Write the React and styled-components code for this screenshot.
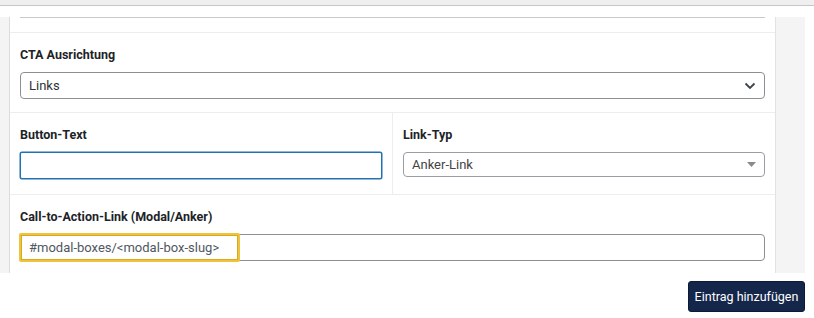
import React from "react";
import styled, { createGlobalStyle } from "styled-components";

const GlobalStyle = createGlobalStyle`
  body {
    margin: 0;
    background: #ffffff;
    font-family: "Segoe UI", Roboto, "Liberation Sans", Arial, sans-serif;
  }
  * {
    box-sizing: border-box;
  }
`;

const TopBar = styled.div`
  height: 6px;
  background: #efefef;
  border-bottom: 1px solid #c6c6c6;
`;

const Gap = styled.div`
  height: 11px;
`;

const Shell = styled.div`
  background: #f4f4f4;
  margin-right: 9px;
  padding: 0 29px 0 9px;
`;

const Panel = styled.div`
  background: #ffffff;
  border-left: 1px solid #dcdcde;
  border-right: 1px solid #e2e2e2;
`;

const Row = styled.div`
  display: flex;
  border-bottom: ${(p) => (p.last ? "none" : "1px solid #ededed")};
`;

const PrevRow = styled.div`
  height: 16px;
  padding: 0 10px;
  border-bottom: 1px solid #ededed;
  &::before {
    content: "";
    display: block;
    height: 1px;
    background: #c9c9c9;
  }
`;

const Cell = styled.div`
  flex: 1;
  padding: 12px 10px ${(p) => p.bottom || 13}px;
  border-right: ${(p) => (p.divider ? "1px solid #ededed" : "none")};
`;

const Label = styled.div`
  font-size: 12.5px;
  font-weight: 700;
  line-height: 20px;
  color: #1d2327;
  margin-bottom: 7px;
`;

const Field = styled.div`
  position: relative;
  display: flex;
  align-items: center;
  height: ${(p) => p.h || 27}px;
  padding: 0 8px;
  border: 1px solid ${(p) => (p.focus ? "#2271b1" : p.soft ? "#9a9ea4" : "#8c8f94")};
  border-radius: ${(p) => (p.focus ? 2 : 4)}px;
  box-shadow: ${(p) => (p.focus ? "0 0 0 0.5px #2271b1" : "none")};
  background: #ffffff;
  font-size: 13px;
  color: ${(p) => p.color || "#2c3338"};
`;

const FieldText = styled.span`
  flex: 1;
  white-space: nowrap;
`;

const Highlight = styled.span`
  position: absolute;
  left: -2px;
  top: -2px;
  width: 221px;
  height: 29px;
  border: 2px solid #f0c33c;
  border-radius: 2px;
  box-shadow: inset 0 0 0 1px #d9a921;
  pointer-events: none;
`;

const Footer = styled.div`
  display: flex;
  justify-content: flex-end;
  padding: 8px 9px 0 0;
`;

const Button = styled.button`
  height: 31px;
  width: 117px;
  padding: 0;
  background: #14264a;
  color: #ffffff;
  border: 1px solid #0c1a36;
  border-radius: 3px;
  font-family: inherit;
  font-size: 12.5px;
  cursor: pointer;
`;

function Chevron() {
  return (
    <svg width="12" height="8" viewBox="0 0 12 8">
      <path d="M1.5 1.5 L6 6 L10.5 1.5" fill="none" stroke="#3c434a" strokeWidth="1.8" />
    </svg>
  );
}

function Caret() {
  return (
    <svg width="9" height="5" viewBox="0 0 9 5">
      <path d="M0 0 L9 0 L4.5 5 Z" fill="#8a8a8a" />
    </svg>
  );
}

export default function App() {
  return (
    <>
      <GlobalStyle />
      <TopBar />
      <Gap />
      <Shell>
        <Panel>
          <PrevRow />
          <Row>
            <Cell>
              <Label>CTA Ausrichtung</Label>
              <Field>
                <FieldText>Links</FieldText>
                <Chevron />
              </Field>
            </Cell>
          </Row>
          <Row>
            <Cell divider bottom={15}>
              <Label>Button-Text</Label>
              <Field focus />
            </Cell>
            <Cell bottom={16}>
              <Label>Link-Typ</Label>
              <Field h={25} soft color="#444">
                <FieldText>Anker-Link</FieldText>
                <Caret />
              </Field>
            </Cell>
          </Row>
          <Row last>
            <Cell bottom={12}>
              <Label>Call-to-Action-Link (Modal/Anker)</Label>
              <Field color="#50575e">
                <FieldText>#modal-boxes/&lt;modal-box-slug&gt;</FieldText>
                <Highlight />
              </Field>
            </Cell>
          </Row>
        </Panel>
      </Shell>
      <Footer>
        <Button>Eintrag hinzufügen</Button>
      </Footer>
    </>
  );
}
